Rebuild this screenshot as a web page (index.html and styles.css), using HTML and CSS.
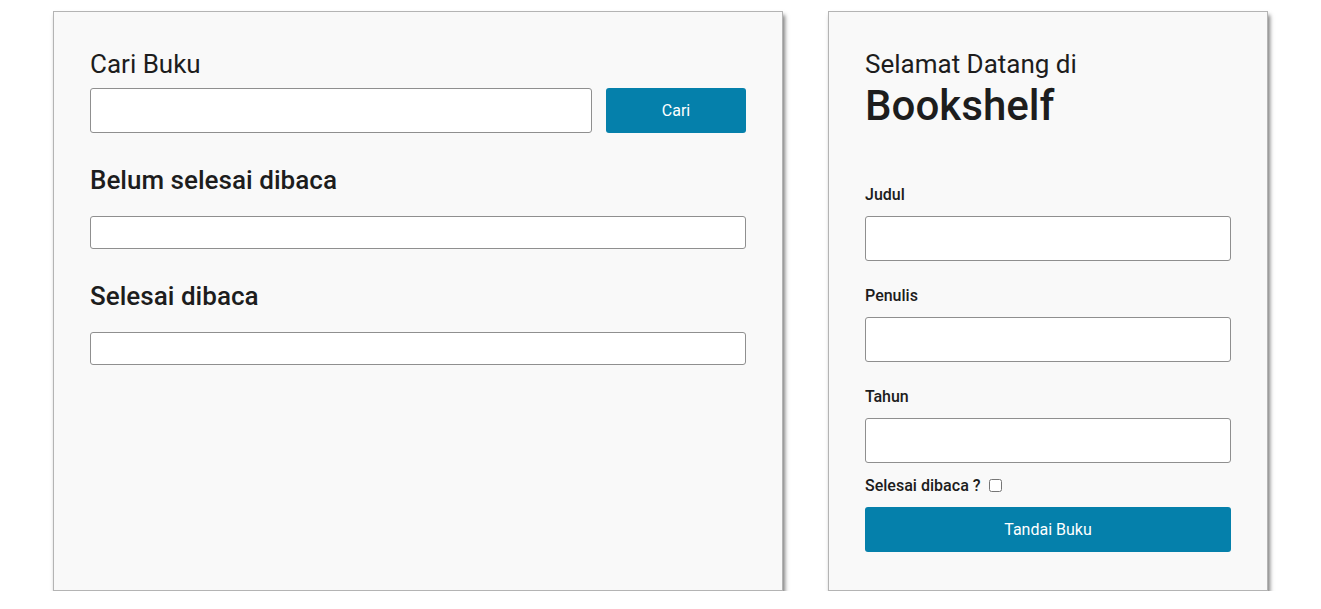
FILE: index.html
```html
<!DOCTYPE html>
<html lang="id">
<head>
<meta charset="utf-8">
<title>Bookshelf</title>
<link rel="stylesheet" href="styles.css">
</head>
<body>
<main class="layout">
  <section class="card card-left">
    <h2 class="title-light">Cari Buku</h2>
    <form class="search-row">
      <input class="text-input search-input" type="text">
      <button class="btn btn-search" type="button">Cari</button>
    </form>
    <h2 class="title-medium title-first">Belum selesai dibaca</h2>
    <div class="book-list"></div>
    <h2 class="title-medium title-next">Selesai dibaca</h2>
    <div class="book-list"></div>
  </section>
  <section class="card card-right">
    <h2 class="title-light">Selamat Datang di</h2>
    <h1 class="brand">Bookshelf</h1>
    <form class="book-form">
      <div class="field">
        <label class="field-label" for="judul">Judul</label>
        <input class="text-input" id="judul" type="text">
      </div>
      <div class="field">
        <label class="field-label" for="penulis">Penulis</label>
        <input class="text-input" id="penulis" type="text">
      </div>
      <div class="field">
        <label class="field-label" for="tahun">Tahun</label>
        <input class="text-input" id="tahun" type="text">
      </div>
      <div class="check-row">
        <label class="field-label" for="selesai">Selesai dibaca ?</label>
        <input class="checkbox" id="selesai" type="checkbox">
      </div>
      <button class="btn btn-submit" type="button">Tandai Buku</button>
    </form>
  </section>
</main>
</body>
</html>
```
FILE: styles.css
```css
* { box-sizing: border-box; }
html, body {
  margin: 0;
  padding: 0;
  background: #ffffff;
  font-family: Roboto, "Liberation Sans", Arial, sans-serif;
  color: #1d1d1d;
}
.layout {
  display: flex;
  justify-content: center;
  align-items: stretch;
  gap: 45px;
  padding-top: 11px;
}
.card {
  background: #f9f9f9;
  border: 1px solid #b4b4b4;
  box-shadow: 2px 4px 4px rgba(0, 0, 0, 0.5);
  padding: 37px 36px 38px 36px;
  height: 580px;
}
.card-left { width: 730px; }
.card-right { width: 440px; }

.title-light {
  margin: 0;
  font-size: 26px;
  line-height: 30px;
  font-weight: 400;
}
.title-medium {
  margin: 0;
  font-family: "Roboto Medium", Roboto, "Liberation Sans", Arial, sans-serif;
  font-size: 26px;
  line-height: 30px;
  font-weight: 500;
}
.title-first { margin-top: 32px; margin-bottom: 21px; }
.title-next { margin-top: 32px; margin-bottom: 21px; }

.search-row {
  display: flex;
  gap: 14px;
  margin-top: 9px;
}
.text-input {
  display: block;
  width: 100%;
  height: 45px;
  border: 1px solid #8f8f8f;
  border-radius: 3px;
  background: #ffffff;
  font-family: inherit;
  font-size: 16px;
  padding: 0 10px;
}
.search-input { flex: 1; }
.btn {
  border: none;
  border-radius: 3px;
  background: #0580ab;
  color: #ffffff;
  font-family: inherit;
  font-size: 16px;
  height: 45px;
}
.btn-search { width: 140px; flex: none; }
.book-list {
  height: 33px;
  border: 1px solid #8f8f8f;
  border-radius: 3px;
  background: #ffffff;
}

.brand {
  margin: 3px 0 0 0;
  font-family: "Roboto Medium", Roboto, "Liberation Sans", Arial, sans-serif;
  font-size: 42px;
  line-height: 48px;
  font-weight: 500;
}
.book-form {
  display: flex;
  flex-direction: column;
  margin-top: 55px;
}
.field {
  display: flex;
  flex-direction: column;
  gap: 12px;
  margin-bottom: 25px;
}
.field-label {
  font-family: "Roboto Medium", Roboto, "Liberation Sans", Arial, sans-serif;
  font-size: 16px;
  line-height: 19px;
  font-weight: 500;
}
.check-row {
  display: flex;
  align-items: center;
  gap: 4px;
  margin-top: -12px;
}
.checkbox {
  margin: 0 0 0 4px;
  width: 13px;
  height: 13px;
}
.btn-submit {
  width: 100%;
  margin-top: 12px;
}
```
